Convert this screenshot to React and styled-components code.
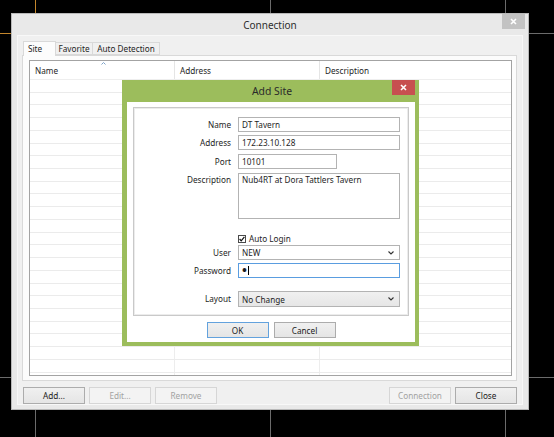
import React from 'react';
import styled, { createGlobalStyle } from 'styled-components';

const GlobalStyle = createGlobalStyle`
  html, body {
    margin: 0;
    padding: 0;
    background: #000;
  }
  body {
    font-family: "Noto Sans", "Open Sans", sans-serif;
    font-size: 8.2px;
    color: #1e1e1e;
  }
`;

const Page = styled.div`
  position: relative;
  width: 554px;
  height: 437px;
  overflow: hidden;
  padding: 13px 0 0 11px;
  box-sizing: border-box;
`;

const Backdrop = styled.svg`
  position: absolute;
  left: 0;
  top: 0;
  width: 554px;
  height: 437px;
`;

const Window = styled.div`
  position: relative;
  width: 518px;
  height: 397px;
  box-sizing: border-box;
  background: #e9e9e9;
  border: 1px solid #b9b9b9;
  padding: 0 5px 4px 5px;
  display: flex;
  flex-direction: column;
`;

const TitleBar = styled.div`
  height: 21px;
  display: flex;
  align-items: center;
  justify-content: center;
  position: relative;
  font-size: 10px;
  color: #2e2e2e;
`;

const CloseBtn = styled.div`
  position: absolute;
  right: ${p => p.$right || 0}px;
  top: 0;
  width: 23px;
  height: 15px;
  background: ${p => (p.$red ? '#c75050' : '#c3c3c3')};
  display: flex;
  align-items: center;
  justify-content: center;
`;

const Client = styled.div`
  flex: 1;
  border: 1px solid #f8f8f8;
  background: #f0f0f0;
  padding: 5px 5px 0 4px;
  display: flex;
  flex-direction: column;
`;

const TabStrip = styled.div`
  height: 14px;
  display: flex;
  align-items: flex-end;
  padding-left: 1px;
`;

const Tab = styled.div`
  width: ${p => p.$w}px;
  height: ${p => (p.$active ? '15px' : '13px')};
  margin-bottom: ${p => (p.$active ? '-1px' : '0')};
  padding: ${p => (p.$active ? '1px 0 0 4px' : '0')};
  border: 1px solid #d9d9d9;
  border-bottom: ${p => (p.$active ? 'none' : '1px solid #d9d9d9')};
  margin-left: ${p => (p.$first ? '0' : '-1px')};
  background: ${p => (p.$active ? '#fcfcfc' : '#f0f0f0')};
  display: flex;
  align-items: ${p => (p.$active ? 'flex-start' : 'center')};
  justify-content: ${p => (p.$active ? 'flex-start' : 'center')};
  box-sizing: border-box;
  position: relative;
  z-index: ${p => (p.$active ? 2 : 1)};
  white-space: nowrap;
`;

const Pane = styled.div`
  height: 326px;
  box-sizing: border-box;
  border: 1px solid #d9d9d9;
  background: #fcfcfc;
  padding: 4px 4px 4px 6px;
  display: flex;
`;

const Table = styled.div`
  flex: 1;
  border: 1px solid #a3a3a3;
  background: #fff;
  overflow: hidden;
  display: flex;
  flex-direction: column;
`;

const HeaderRow = styled.div`
  height: 18px;
  flex-shrink: 0;
  display: grid;
  grid-template-columns: 145px 145px 1fr;
  border-bottom: 1px solid #eeeeee;
`;

const HeaderCell = styled.div`
  position: relative;
  display: flex;
  align-items: center;
  padding-left: 5px;
  border-right: 1px solid #e5e5e5;
  &:last-child {
    border-right: none;
  }
`;

const SortArrow = styled.svg`
  position: absolute;
  top: 1px;
  left: 71px;
`;

const Row = styled.div`
  height: 12.72px;
  flex-shrink: 0;
  box-sizing: border-box;
  display: grid;
  grid-template-columns: 145px 145px 1fr;
  border-bottom: 1px solid #ebebeb;
`;

const Cell = styled.div`
  border-right: 1px solid #ededed;
  &:last-child {
    border-right: none;
  }
`;

const ButtonBar = styled.div`
  margin-top: 6px;
  height: 17px;
  display: flex;
  gap: 4px;
  padding-left: 1px;
`;

const Spacer = styled.div`
  flex: 1;
`;

const Button = styled.div`
  width: ${p => p.$w || 62}px;
  height: ${p => p.$h || 17}px;
  box-sizing: border-box;
  display: flex;
  align-items: center;
  justify-content: center;
  border: 1px solid ${p => (p.$disabled ? '#d6d6d6' : p.$default ? '#63a2dd' : '#acacac')};
  background: ${p => (p.$disabled ? '#f3f3f3' : 'linear-gradient(#f0f0f0, #e5e5e5)')};
  color: ${p => (p.$disabled ? '#a2a2a2' : '#1a1a1a')};
`;

const Dialog = styled.div`
  position: absolute;
  left: 122px;
  top: 80px;
  width: 297px;
  height: 266px;
  box-sizing: border-box;
  background: #9cbd5c;
  padding: 0 4px 4px 5px;
  display: flex;
  flex-direction: column;
  z-index: 5;
`;

const DialogTitle = styled.div`
  height: 22px;
  display: flex;
  align-items: center;
  justify-content: center;
  position: relative;
  font-size: 10.4px;
  color: #2a2a2a;
  padding-left: 2px;
`;

const DialogBody = styled.div`
  flex: 1;
  background: #fff;
  padding: 5px 6px 0 6px;
  display: flex;
  flex-direction: column;
`;

const GroupBox = styled.div`
  height: 209px;
  box-sizing: border-box;
  border: 1px solid #c9c9c9;
  box-shadow: inset 0 0 0 1px #ececec;
  padding-top: 9px;
  display: flex;
  flex-direction: column;
`;

const FormRow = styled.div`
  display: grid;
  grid-template-columns: 97px 162px;
  column-gap: 7px;
  margin-top: ${p => p.$mt || 0}px;
  height: ${p => p.$h || 15}px;
`;

const Label = styled.div`
  text-align: right;
  line-height: ${p => (p.$top ? '13px' : '15px')};
`;

const Input = styled.div`
  box-sizing: border-box;
  height: 100%;
  width: ${p => p.$w || 162}px;
  border: 1px solid ${p => (p.$focus ? '#5a9de0' : '#b3b3b3')};
  background: #fff;
  padding: 0 3px;
  line-height: ${p => (p.$multi ? '12px' : '13px')};
  display: flex;
  align-items: ${p => (p.$multi ? 'flex-start' : 'center')};
  white-space: nowrap;
`;

const Select = styled.div`
  box-sizing: border-box;
  height: 100%;
  border: 1px solid #b3b3b3;
  background: ${p => (p.$button ? 'linear-gradient(#f0f0f0, #e6e6e6)' : '#fff')};
  padding: 0 5px 0 3px;
  display: flex;
  align-items: center;
  justify-content: space-between;
`;

const CheckLine = styled.label`
  grid-column: 2;
  display: flex;
  align-items: center;
  gap: 3px;
  line-height: 9px;
`;

const CheckBox = styled.span`
  width: 8px;
  height: 8px;
  box-sizing: border-box;
  border: 1px solid #4a4a4a;
  background: #fff;
  display: flex;
  align-items: center;
  justify-content: center;
`;

const Dot = styled.span`
  font-size: 13px;
  line-height: 13px;
  font-weight: 700;
`;

const Caret = styled.span`
  width: 1px;
  height: 9px;
  background: #000;
  margin-left: 1px;
`;

const DialogButtons = styled.div`
  margin-top: 6px;
  display: flex;
  justify-content: center;
  gap: 5px;
`;

const Chevron = () => (
  <svg width="6" height="4" viewBox="0 0 6 4">
    <polyline points="0.5,0.5 3,3 5.5,0.5" fill="none" stroke="#333" strokeWidth="1.1" />
  </svg>
);

const CloseX = () => (
  <svg width="7" height="7" viewBox="0 0 7 7">
    <path d="M1 1L6 6M6 1L1 6" stroke="#fff" strokeWidth="1.6" />
  </svg>
);

const rows = Array.from({ length: 24 });

export default function App() {
  return (
    <>
      <GlobalStyle />
      <Page>
        <Backdrop viewBox="0 0 554 437">
          <line x1="35.5" y1="0" x2="35.5" y2="13" stroke="#c4862c" />
          <line x1="0" y1="33.5" x2="11" y2="33.5" stroke="#c4862c" />
          <line x1="270.5" y1="0" x2="270.5" y2="13" stroke="#6b6b6b" />
          <line x1="505.5" y1="0" x2="505.5" y2="13" stroke="#6b6b6b" />
          <line x1="529" y1="33.5" x2="554" y2="33.5" stroke="#6b6b6b" />
          <line x1="35.5" y1="410" x2="35.5" y2="437" stroke="#6b6b6b" />
          <line x1="270.5" y1="410" x2="270.5" y2="437" stroke="#6b6b6b" />
          <line x1="505.5" y1="410" x2="505.5" y2="437" stroke="#6b6b6b" />
          <line x1="0" y1="377.5" x2="11" y2="377.5" stroke="#6b6b6b" />
          <line x1="529" y1="377.5" x2="554" y2="377.5" stroke="#6b6b6b" />
        </Backdrop>

        <Window>
          <TitleBar>
            Connection
            <CloseBtn $right={-2}>
              <CloseX />
            </CloseBtn>
          </TitleBar>
          <Client>
            <TabStrip>
              <Tab $active $first $w={33}>Site</Tab>
              <Tab $w={38}>Favorite</Tab>
              <Tab $w={68}>Auto Detection</Tab>
            </TabStrip>
            <Pane>
              <Table>
                <HeaderRow>
                  <HeaderCell>
                    Name
                    <SortArrow width="5" height="3" viewBox="0 0 5 3">
                      <polyline points="0.5,2.5 2.5,0.5 4.5,2.5" fill="none" stroke="#7ea3c8" strokeWidth="1" />
                    </SortArrow>
                  </HeaderCell>
                  <HeaderCell>Address</HeaderCell>
                  <HeaderCell>Description</HeaderCell>
                </HeaderRow>
                {rows.map((_, i) => (
                  <Row key={i}>
                    <Cell />
                    <Cell />
                    <Cell />
                  </Row>
                ))}
              </Table>
            </Pane>
            <ButtonBar>
              <Button>Add...</Button>
              <Button $disabled>Edit...</Button>
              <Button $disabled>Remove</Button>
              <Spacer />
              <Button $disabled>Connection</Button>
              <Button>Close</Button>
            </ButtonBar>
          </Client>
        </Window>

        <Dialog>
          <DialogTitle>
            Add Site
            <CloseBtn $red $right={0}>
              <CloseX />
            </CloseBtn>
          </DialogTitle>
          <DialogBody>
            <GroupBox>
              <FormRow>
                <Label>Name</Label>
                <Input>DT Tavern</Input>
              </FormRow>
              <FormRow $mt={3}>
                <Label>Address</Label>
                <Input>172.23.10.128</Input>
              </FormRow>
              <FormRow $mt={4}>
                <Label>Port</Label>
                <Input $w={99}>10101</Input>
              </FormRow>
              <FormRow $mt={4} $h={46}>
                <Label $top>Description</Label>
                <Input $multi>Nub4RT at Dora Tattlers Tavern</Input>
              </FormRow>
              <FormRow $mt={15} $h={9}>
                <CheckLine>
                  <CheckBox>
                    <svg width="6" height="6" viewBox="0 0 6 6">
                      <polyline points="0.6,3 2.2,4.8 5.4,0.8" fill="none" stroke="#111" strokeWidth="1.2" />
                    </svg>
                  </CheckBox>
                  Auto Login
                </CheckLine>
              </FormRow>
              <FormRow $mt={2}>
                <Label>User</Label>
                <Select>
                  NEW
                  <Chevron />
                </Select>
              </FormRow>
              <FormRow $mt={3}>
                <Label>Password</Label>
                <Input $focus>
                  <Dot>•</Dot>
                  <Caret />
                </Input>
              </FormRow>
              <FormRow $mt={13} $h={16}>
                <Label>Layout</Label>
                <Select $button>
                  No Change
                  <Chevron />
                </Select>
              </FormRow>
            </GroupBox>
            <DialogButtons>
              <Button $default $h={16}>OK</Button>
              <Button $h={16}>Cancel</Button>
            </DialogButtons>
          </DialogBody>
        </Dialog>
      </Page>
    </>
  );
}
